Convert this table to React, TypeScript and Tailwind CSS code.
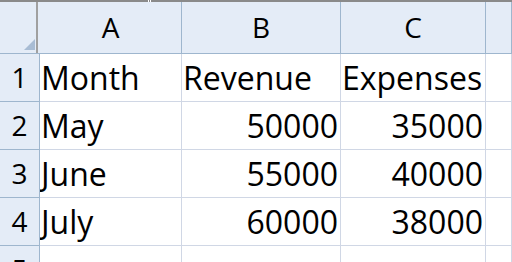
import type { ReactNode } from 'react';

const rows = [
  ['Month', 'Revenue', 'Expenses'],
  ['May', '50000', '35000'],
  ['June', '55000', '40000'],
  ['July', '60000', '38000'],
];

const font = { fontFamily: '"Open Sans", "Liberation Sans", sans-serif' };

function HeadCell({ children }: { children?: ReactNode }) {
  return (
    <div className="h-[52px] border-r border-b border-[#9eb6ce] bg-[#e4ecf7] text-center text-[28px] leading-[51px] text-black">
      {children}
    </div>
  );
}

function RowNum({ n }: { n: number }) {
  return (
    <div className="h-[48px] border-r border-b border-[#9eb6ce] bg-[#e4ecf7] text-center text-[28px] leading-[47px] text-black">
      {n}
    </div>
  );
}

function Cell({ children, right }: { children?: ReactNode; right?: boolean }) {
  return (
    <div
      className={`h-[48px] overflow-hidden whitespace-nowrap border-r border-b border-[#d0d7e5] bg-white text-[32px] leading-[47px] text-black ${
        right ? 'pr-[2px] text-right' : 'pl-px text-left'
      }`}
    >
      {children}
    </div>
  );
}

export default function App() {
  return (
    <div className="h-[262px] w-[512px] overflow-hidden bg-white" style={font}>
      {/* split bar */}
      <div className="relative h-[2px] bg-[#8a8a8a]">
        <div className="absolute left-[148px] top-0 h-[2px] w-px bg-white" />
        <div className="absolute left-[150px] top-0 h-[2px] w-px bg-white" />
      </div>
      <div className="grid grid-cols-[40px_142px_159px_145px_1fr]">
        {/* corner */}
        <div className="relative h-[52px] border-b border-[#9eb6ce] bg-[#e4ecf7]">
          <div className="absolute right-0 top-0 h-full w-[4px] border-l-2 border-[#a0a0a0] bg-[#e4ecf7]" />
          <div className="absolute bottom-[3px] right-[5px] h-0 w-0 border-b-[11px] border-l-[11px] border-b-[#a8bcd4] border-l-transparent" />
        </div>
        <HeadCell>A</HeadCell>
        <HeadCell>B</HeadCell>
        <HeadCell>C</HeadCell>
        <HeadCell />

        {rows.map((r, i) => (
          <div key={i} className="contents">
            <RowNum n={i + 1} />
            <Cell>{r[0]}</Cell>
            <Cell right={i > 0}>{r[1]}</Cell>
            <Cell right={i > 0}>{r[2]}</Cell>
            <Cell />
          </div>
        ))}
        <RowNum n={5} />
        <Cell />
        <Cell />
        <Cell />
        <Cell />
      </div>
    </div>
  );
}
